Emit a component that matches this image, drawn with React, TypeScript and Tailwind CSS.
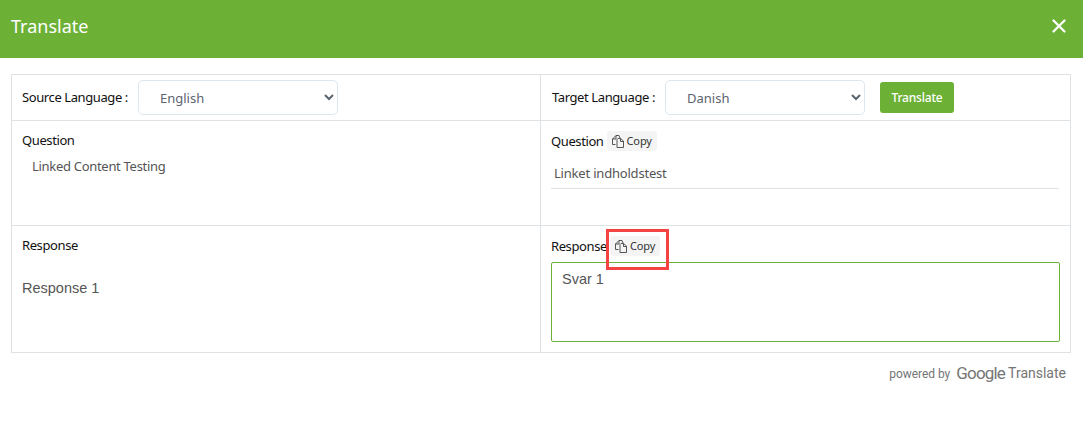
import { X } from "lucide-react";

const uiFont = "font-['Noto_Sans',sans-serif]";
const labelClass = "text-[13px] font-normal text-[#111] tracking-[-0.4px]";
const selectClass =
  "h-[35px] w-[200px] rounded-[5px] border border-[#dce7ee] bg-white pl-[17px] pr-[8px] text-[13px] text-[#5c6470] outline-none";

function CopyIcon() {
  return (
    <svg width="13" height="13" viewBox="0 0 13 13" fill="none" stroke="#444" strokeWidth="0.9">
      <path d="M3.5 9.5H0.5V4L4 0.5H7L8 3" />
      <path d="M4 0.5V4H0.5" />
      <path d="M6 3.5H8.5L11.5 6V12.5H5V4.5Z" />
      <path d="M8.5 3.5V6.5H11.5" />
    </svg>
  );
}

function CopyButton() {
  return (
    <button
      type="button"
      className="flex h-[20px] items-center gap-[2px] rounded-[3px] bg-[#f4f4f4] px-[5px] text-[11px] tracking-[-0.1px] text-[#333]"
    >
      <CopyIcon />
      Copy
    </button>
  );
}

export default function App() {
  return (
    <div className={`h-[432px] w-[1083px] overflow-hidden bg-white ${uiFont}`}>
      <header className="flex h-[58px] items-center justify-between bg-[#6cb136] pb-[6px] pl-[11px] pr-[13px] text-white">
        <h1 className="text-[18px] font-normal">Translate</h1>
        <X size={22} strokeWidth={2.5} />
      </header>

      <div className="mx-[11px] mt-[16px] grid w-[1060px] grid-cols-[529px_1fr] grid-rows-[46px_105px_126px] border border-[#dfe2e4]">
        <div className="flex items-center gap-[10px] border-r border-b border-[#dfe2e4] pl-[10px]">
          <span className={labelClass}>Source Language :</span>
          <select className={selectClass} defaultValue="English">
            <option>English</option>
          </select>
        </div>
        <div className="flex items-center border-b border-[#dfe2e4] pl-[11px]">
          <span className={labelClass}>Target Language :</span>
          <select className={`${selectClass} ml-[10px]`} defaultValue="Danish">
            <option>Danish</option>
          </select>
          <button
            type="button"
            className="ml-[15px] h-[31px] w-[74px] rounded-[3px] bg-[#6cb136] text-[12px] font-medium tracking-[-0.2px] text-white"
          >
            Translate
          </button>
        </div>

        <div className="border-r border-b border-[#dfe2e4] pl-[10px] pt-[9px]">
          <div className={`${labelClass} leading-[20px]`}>Question</div>
          <p className="mt-[6px] pl-[10px] text-[13px] leading-[20px] tracking-[-0.3px] text-[#555]">
            Linked Content Testing
          </p>
        </div>
        <div className="border-b border-[#dfe2e4] pl-[10px] pt-[10px]">
          <div className="flex items-center gap-[3px]">
            <span className={`${labelClass} leading-[20px]`}>Question</span>
            <CopyButton />
          </div>
          <p className="mt-[12px] mr-[11px] border-b border-[#dfe2e4] pb-[5px] pl-[3px] text-[13px] leading-[20px] tracking-[-0.2px] text-[#555]">
            Linket indholdstest
          </p>
        </div>

        <div className="border-r border-[#dfe2e4] pl-[10px] pt-[9px]">
          <div className={`${labelClass} leading-[20px]`}>Response</div>
          <p className="mt-[23px] font-['Liberation_Sans',sans-serif] text-[14.5px] leading-[20px] text-[#555]">
            Response 1
          </p>
        </div>
        <div className="pl-[10px] pt-[10px]">
          <div className="flex items-center gap-[3px]">
            <span className={`${labelClass} leading-[20px]`}>Response</span>
            <CopyButton />
          </div>
          <div className="relative mt-[6px]">
            <textarea
              className="block h-[80px] w-[509px] resize-none rounded-[2px] border border-[#6cb136] px-[10px] py-[6px] font-['Liberation_Sans',sans-serif] text-[14.5px] leading-[20px] text-[#555] outline-none"
              defaultValue="Svar 1"
            />
            {/* red annotation over the copy button */}
            <div className="absolute left-[55px] top-[-33px] h-[41px] w-[63px] border-[3px] border-[#f44343]" />
          </div>
        </div>
      </div>

      <div className="mr-[17px] mt-[8px] flex items-center justify-end gap-[3px] font-['Roboto',sans-serif] text-[#757575]">
        <span className="mr-[3px] text-[12px] tracking-[-0.05px]">powered by</span>
        <span className="text-[17px] font-normal tracking-[-0.8px]">Google</span>
        <span className="text-[14px]">Translate</span>
      </div>
    </div>
  );
}
